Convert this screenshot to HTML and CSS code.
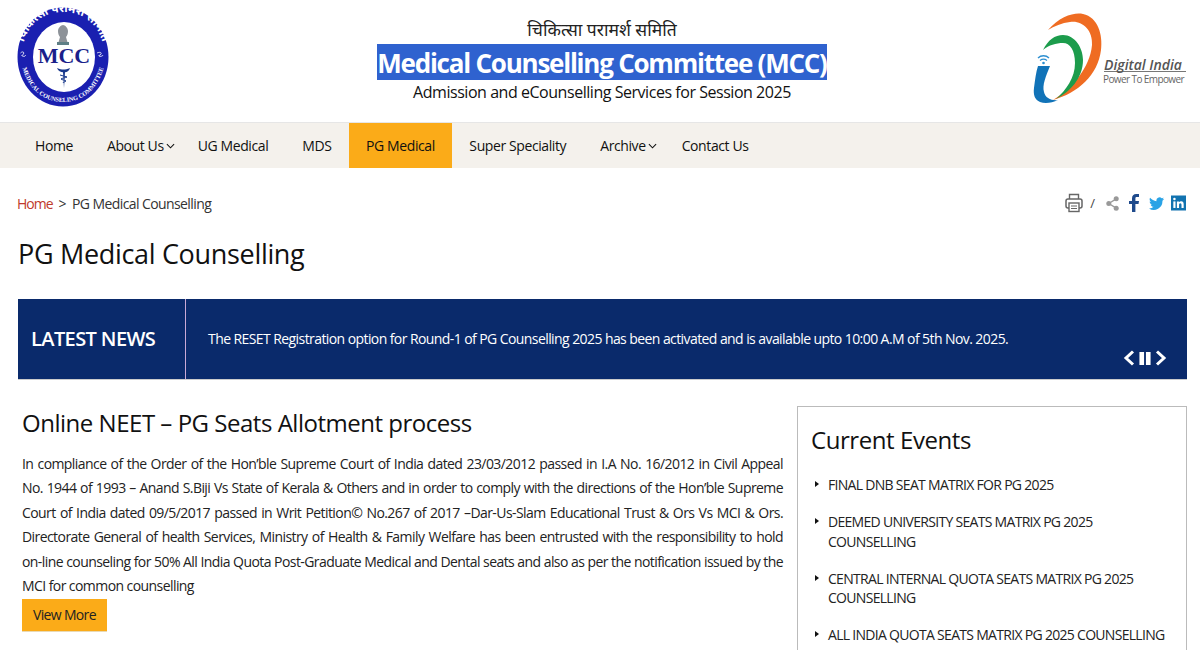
FILE: index.html
```html
<!DOCTYPE html>
<html lang="en">
<head>
<meta charset="utf-8">
<title>PG Medical Counselling</title>
<link rel="stylesheet" href="styles.css">
</head>
<body>
<header class="masthead">
  <svg class="logo-mcc" viewBox="0 0 130 120" width="130" height="120" aria-label="MCC logo">
    <defs>
      <path id="ringTop" d="M22 50 C26 24 44 12 63 12 C83 12 100 24 104 50"/>
      <path id="ringBottom" d="M21 62 C27 90 44 102 63 102 C82 102 99 90 105 62"/>
    </defs>
    <ellipse cx="63" cy="57" rx="45.500" ry="49.500" fill="#1a1fb0"/>
    <ellipse cx="64" cy="57" rx="31" ry="35" fill="#fff"/>
    <text class="ring-hi"><textPath href="#ringTop" startOffset="50%" text-anchor="middle">चिकित्सा परामर्श समिति</textPath></text>
    <text class="ring-en"><textPath href="#ringBottom" startOffset="50%" text-anchor="middle">MEDICAL COUNSELING COMMITTEE</textPath></text>
    <path d="M20.500 53c2-2 4-1 3 1s-3 1-1 2 3 0 3-1M97 53c2-1 5-1 4 1s-3 1-2 2 4 0 4-1" fill="none" stroke="#fff" stroke-width=".8"/>
    <path d="M58 31c0-3 3-6 5-6s5 3 5 6c0 3-1 5-2 6l2 7H58l2-7c-1-1-2-3-2-6z" fill="#8d9298"/>
    <rect x="57" y="42" width="12" height="3" fill="#5f7f86"/>
    <text class="mcc-word" x="64" y="63" text-anchor="middle">MCC</text>
    <path d="M57 68c3 1.500 4.500 1.500 6.500 1.500S67 69.500 70 68c-1 3-3 4-5 4.300L64 88l-1-15.700c-2-.3-5-1.300-6-4.300z" fill="#1a3a8c"/>
    <path d="M60 75c2 1 5 1 7 2-2 1-5 1-6 2 1 1 4 1 5 2-1 1-3 1-3 2" fill="none" stroke="#1a3a8c"/>
  </svg>
  <div class="titles">
    <div class="hindi">चिकित्सा परामर्श समिति</div>
    <h1 class="main-title"><span class="selected">Medical Counselling Committee (MCC)</span></h1>
    <div class="subtitle">Admission and eCounselling Services for Session 2025</div>
  </div>
  <svg class="logo-di" viewBox="0 0 180 120" width="180" height="120" aria-label="Digital India logo">
    <path d="M28 30C40 16 55 12 63 14c15 3 20 21 18 36-3 25-23 43-48 50 19-12 37-32 39-55 1-15-10-25-22-23-8 1-16 4-22 8z" fill="#ef6c22"/>
    <path d="M23 50c5-10 12-15 20-15 12 0 20 13 20 25 0 18-13 32-27 39 10-9 19-21 19-36 0-13-5-20-12-20-7 0-14 2-20 7z" fill="#1c9c4c"/>
    <path d="M18 66h12c-4 10-8 19-6 26 1 6 8 9 14 8-6 3-13 4-18 2-5-2-7-7-6-14 1-8 2-16 4-22z" fill="#1173b8"/>
    <path d="M18 58c3-3 8-3 11 0M20 60.500c2-1.500 5-1.500 7 0" fill="none" stroke="#2d8fd0" stroke-width="1.300"/>
    <circle cx="23.500" cy="63" r="1.300" fill="#2d8fd0"/>
    <text class="di-name" x="84" y="70">Digital India</text>
    <rect x="84" y="71" width="82" height="0.800" fill="#555"/>
    <text class="di-tag" x="83" y="83">Power To Empower</text>
  </svg>
</header>

<nav class="mainnav">
  <a class="nav-item" href="#">Home</a>
  <a class="nav-item has-sub" href="#">About Us<svg class="chev" viewBox="0 0 10 6" width="9" height="6"><path d="M1 1l4 4 4-4" fill="none" stroke="#111" stroke-width="1.200"/></svg></a>
  <a class="nav-item" href="#">UG Medical</a>
  <a class="nav-item" href="#">MDS</a>
  <a class="nav-item active" href="#">PG Medical</a>
  <a class="nav-item" href="#">Super Speciality</a>
  <a class="nav-item has-sub" href="#">Archive<svg class="chev" viewBox="0 0 10 6" width="9" height="6"><path d="M1 1l4 4 4-4" fill="none" stroke="#111" stroke-width="1.200"/></svg></a>
  <a class="nav-item" href="#">Contact Us</a>
</nav>

<main class="page">
  <div class="crumb-row">
    <div class="crumbs"><a href="#">Home</a><span class="sep">&gt;</span><span>PG Medical Counselling</span></div>
    <div class="tools">
      <svg class="t-print" viewBox="0 0 18 20" width="18" height="20"><path d="M4.500 6V1.500h9V6" fill="none" stroke="#666" stroke-width="1.400"/><rect x="1" y="6" width="16" height="9" rx="2" fill="none" stroke="#666" stroke-width="1.500"/><rect x="4" y="10" width="10" height="8.500" fill="#fff" stroke="#666" stroke-width="1.400"/><path d="M6 13h6M6 15.500h6" stroke="#666" stroke-width="1.200"/></svg>
      <span class="slash">/</span>
      <svg class="t-share" viewBox="0 0 14 16" width="13" height="15"><path d="M3 8l8-5M3 8l8 5" stroke="#999" stroke-width="1.500"/><circle cx="3" cy="8" r="2.700" fill="#999"/><circle cx="11" cy="3" r="2.700" fill="#999"/><circle cx="11" cy="13" r="2.700" fill="#999"/></svg>
      <svg class="t-fb" viewBox="0 0 10 18" width="10" height="18"><path d="M3 18V10H0V7h3V4.500C3 1.500 4.600 0 7.200 0H10v3H8c-1 0-1.600.4-1.600 1.600V7H10l-.5 3H6.400v8z" fill="#1e4a8c"/></svg>
      <svg class="t-tw" viewBox="0 0 24 20" width="15" height="13"><path d="M24 2.400c-.9.400-1.800.7-2.800.8 1-.6 1.800-1.600 2.200-2.700-1 .6-2 1-3.100 1.200A4.900 4.900 0 0 0 12 6.200C8 6 4.300 4.100 1.700.9.400 3.100 1 6 3.200 7.500c-.8 0-1.600-.2-2.200-.6 0 2.400 1.700 4.400 3.900 4.900-.7.200-1.500.2-2.200.1.600 2 2.400 3.400 4.600 3.400A9.900 9.900 0 0 1 0 17.800 13.900 13.900 0 0 0 21.500 5.500c1-.7 1.800-1.600 2.500-3.100z" fill="#2aa3e6"/></svg>
      <svg class="t-in" viewBox="0 0 16 16" width="15" height="16"><rect width="16" height="16" fill="#1273b0"/><rect x="2.500" y="6.300" width="2.300" height="7" fill="#fff"/><circle cx="3.650" cy="3.800" r="1.350" fill="#fff"/><path d="M6.300 6.300h2.200v1c.5-.8 1.300-1.200 2.300-1.200 2 0 2.700 1.200 2.700 3.300v3.900h-2.300V10c0-1-.3-1.800-1.300-1.800s-1.300.8-1.300 1.800v3.300H6.300z" fill="#fff"/></svg>
    </div>
  </div>

  <h2 class="page-title">PG Medical Counselling</h2>

  <section class="news">
    <div class="news-label">LATEST NEWS</div>
    <div class="news-body">
      <p class="news-text">The RESET Registration option for Round-1 of PG Counselling 2025 has been activated and is available upto 10:00 A.M of 5th Nov. 2025.</p>
      <div class="news-ctrl">
        <svg viewBox="0 0 12 16" width="12" height="16"><path d="M10 1.500L3 8l7 6.500" fill="none" stroke="#fff" stroke-width="3"/></svg>
        <svg viewBox="0 0 12 14" width="12" height="13"><rect x="0" y="0" width="5" height="14" fill="#fff"/><rect x="7" y="0" width="5" height="14" fill="#fff"/></svg>
        <svg viewBox="0 0 12 16" width="12" height="16"><path d="M2 1.500L9 8l-7 6.500" fill="none" stroke="#fff" stroke-width="3"/></svg>
      </div>
    </div>
  </section>

  <div class="columns">
    <article class="intro">
      <h2 class="intro-title">Online NEET – PG Seats Allotment process</h2>
      <p class="intro-text">In compliance of the Order of the Hon’ble Supreme Court of India dated 23/03/2012 passed in I.A No. 16/2012 in Civil Appeal No. 1944 of 1993 – Anand S.Biji Vs State of Kerala &amp; Others and in order to comply with the directions of the Hon’ble Supreme Court of India dated 09/5/2017 passed in Writ Petition© No.267 of 2017 –Dar-Us-Slam Educational Trust &amp; Ors Vs MCI &amp; Ors. Directorate General of health Services, Ministry of Health &amp; Family Welfare has been entrusted with the responsibility to hold on-line counseling for 50% All India Quota Post-Graduate Medical and Dental seats and also as per the notification issued by the MCI for common counselling</p>
      <a class="btn" href="#">View More</a>
    </article>
    <aside class="events">
      <h2 class="events-title">Current Events</h2>
      <ul class="events-list">
        <li>FINAL DNB SEAT MATRIX FOR PG 2025</li>
        <li>DEEMED UNIVERSITY SEATS MATRIX PG 2025 COUNSELLING</li>
        <li>CENTRAL INTERNAL QUOTA SEATS MATRIX PG 2025 COUNSELLING</li>
        <li>ALL INDIA QUOTA SEATS MATRIX PG 2025 COUNSELLING</li>
      </ul>
    </aside>
  </div>
</main>
</body>
</html>
```
FILE: styles.css
```css
* { box-sizing: border-box; }
html, body { margin: 0; height: 650px; overflow: hidden; }
body { font-family: "Open Sans", "Noto Sans", sans-serif; color: #111; background: #fff; }
a { text-decoration: none; color: inherit; }

.masthead { height: 123px; display: flex; align-items: flex-start; border-bottom: 1px solid #e6e6e6; overflow: hidden; }
.logo-mcc { flex: none; }
.ring-hi { font: 700 11.500px "Noto Sans", "DejaVu Sans", sans-serif; fill: #fff; }
.ring-en { font: 700 6.200px "Liberation Serif", serif; fill: #fff; }
.mcc-word { font: 700 22px "Liberation Serif", serif; fill: #1a1f8a; }
.titles { flex: 1; text-align: center; padding-left: 54px; }
.hindi { font: 400 17.500px/27px "Noto Sans", "DejaVu Sans", sans-serif; margin-top: 16px; height: 27px; color: #222; }
.main-title { font-size: 26px; line-height: 36px; font-weight: 700; letter-spacing: -1.230px; margin: 1px 0 0; height: 36px; }
.selected { background: #2f62cf; color: #fff; padding: 0; display: inline-block; height: 36px; line-height: 38px; white-space: nowrap; }
.subtitle { font-size: 16px; line-height: 20px; letter-spacing: -0.460px; margin-top: 2px; }
.logo-di { flex: none; }
.di-name { font: italic 600 14px "Open Sans", sans-serif; fill: #555; }
.di-tag { font: 400 10px "Open Sans", sans-serif; letter-spacing: -0.600px; fill: #666; }

.mainnav { height: 45px; background: #f4f1ec; display: flex; padding-left: 18px; font-size: 14px; letter-spacing: -0.400px; }
.nav-item { display: flex; align-items: center; padding: 0 17px; color: #111; white-space: nowrap; }
.nav-item.has-sub { padding-right: 0; gap: 2px; }
.nav-item.has-sub + .nav-item { padding-left: 23px; }
.nav-item.has-sub + .nav-item:last-child { padding-left: 25px; }
.nav-item.active { background: #fbab18; padding: 0 17.500px; }

.page { padding: 0 13px 0 18px; }
.crumb-row { display: flex; justify-content: space-between; align-items: center; height: 20px; margin-top: 25px; }
.crumbs { font-size: 14px; letter-spacing: -0.590px; color: #333; display: flex; gap: 6px; margin-left: -1px; }
.crumbs a { color: #c0392b; letter-spacing: -1px; }
.tools { display: flex; align-items: center; margin-right: 1px; }
.slash { font-size: 13px; color: #444; margin: 0 11px 0 7px; }
.t-fb { margin-left: 10px; }
.t-tw { margin-left: 10px; }
.t-in { margin-left: 7px; }
.page-title { font-size: 27px; line-height: 36px; font-weight: 500; letter-spacing: -0.320px; margin: 23px 0 0; color: #111; }

.news { display: flex; height: 81px; margin-top: 27px; background: #0a2a6b; color: #fff; border-bottom: 1px solid #ccc; }
.news-label { width: 168px; flex: none; border-right: 1px solid #c9a9d6; padding: 25px 0 0 13px; font-size: 20px; line-height: 30px; font-weight: 600; letter-spacing: -0.600px; }
.news-body { flex: 1; position: relative; padding: 28px 0 0 22px; }
.news-text { margin: 0; font-size: 14px; line-height: 24px; letter-spacing: -0.580px; white-space: nowrap; }
.news-ctrl { position: absolute; right: 20px; bottom: 13px; display: flex; gap: 4px; align-items: center; }

.columns { display: flex; justify-content: space-between; align-items: flex-start; margin-top: 26px; }
.intro { width: 765px; padding-left: 4px; flex: none; }
.intro-title { font-size: 24px; line-height: 32px; font-weight: 500; letter-spacing: -0.480px; margin: 1px 0 0; }
.intro-text { font-size: 14px; line-height: 24.400px; letter-spacing: -0.572px; margin: 13px 0 0; text-align: justify; color: #222; }
.btn { display: inline-block; background: #fbab18; font-size: 14px; line-height: 32px; letter-spacing: -0.660px; padding: 0 11px; color: #222; border-bottom: 1px solid #e8d9b5; margin-top: 1px; }

.events { width: 390px; flex: none; height: 260px; border: 1px solid #bbb; padding: 16px 13px 0; }
.events-title { font-size: 24px; line-height: 34px; font-weight: 500; letter-spacing: -0.430px; margin: 0 0 18px; }
.events-list { list-style: none; margin: 0; padding: 0; font-size: 14px; line-height: 19.500px; letter-spacing: -0.700px; color: #222; }
.events-list li { position: relative; padding-left: 17px; margin-bottom: 17.500px; }
.events-list li::before { content: ""; position: absolute; left: 4px; top: 6px; border-left: 4px solid #111; border-top: 3.500px solid transparent; border-bottom: 3.500px solid transparent; }
```
